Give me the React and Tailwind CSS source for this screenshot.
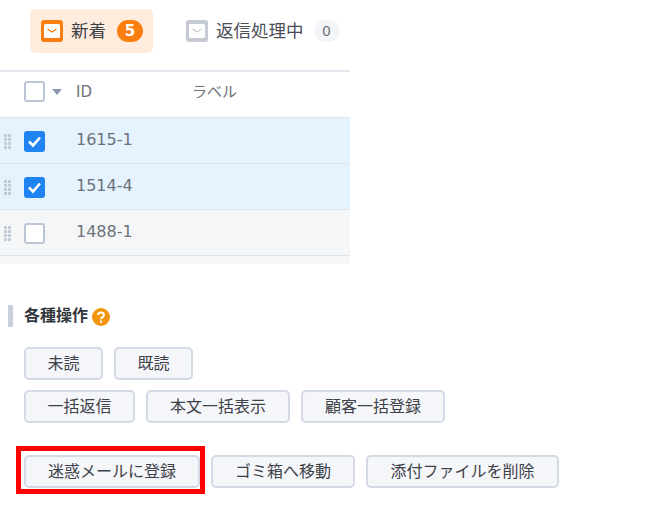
const FONT = "font-['DejaVu_Sans','Noto_Sans_CJK_JP',sans-serif]";

function Mail({ color, line }) {
  return (
    <svg width="22" height="22" viewBox="0 0 22 22" className="shrink-0">
      <rect x="0" y="0" width="22" height="22" rx="3" fill={color} />
      <rect x="3" y="4" width="16" height="14" rx="1.5" fill="#fff" />
      <path d="M6.5 9 L11 12 L15.5 9" fill="none" stroke={line} strokeWidth="1.4" />
    </svg>
  );
}

function Grip() {
  return (
    <svg width="8" height="16" viewBox="0 0 8 16" className="shrink-0">
      {[0, 4, 8, 12].map((y) =>
        [0, 4].map((x) => <rect key={`${x}-${y}`} x={x} y={y} width="3" height="3" fill="#c3cad8" />)
      )}
    </svg>
  );
}

function Check({ checked }) {
  if (checked) {
    return (
      <span className="flex size-[21px] items-center justify-center rounded-[3px] bg-[#1f83f2]">
        <svg width="15" height="13" viewBox="0 0 15 13">
          <path d="M2 6.5 L6 10.5 L13 2.5" fill="none" stroke="#fff" strokeWidth="2.6" />
        </svg>
      </span>
    );
  }
  return <span className="block size-[21px] rounded-[3px] border-2 border-[#bcc5d6] bg-white" />;
}

function Row({ id, checked }) {
  const bg = checked ? "bg-[#e5f3fe]" : "bg-[#f5f6f8]";
  return (
    <div className={`flex h-[46px] items-start border-b border-[#dfe3ea] ${bg}`}>
      <div className="ml-1 mt-[16px] w-[20px]">
        <Grip />
      </div>
      <div className="mt-[13px]">
        <Check checked={checked} />
      </div>
      <div className="ml-[31px] mt-[10px] text-[16px] leading-[24px] text-[#6d7179]">{id}</div>
    </div>
  );
}

function Btn({ children, className = "" }) {
  return (
    <button
      className={`flex h-[33px] items-center justify-center rounded-[5px] border-2 border-[#d3dae6] bg-[#f5f6f9] text-[16px] text-[#3d4148] ${className}`}
    >
      {children}
    </button>
  );
}

export default function App() {
  return (
    <div className={`h-[507px] w-[670px] overflow-hidden bg-white ${FONT}`}>
      <div className="flex h-[70px] w-[350px] items-start pt-[9px]">
        <div className="ml-[30px] flex h-[44px] w-[123px] items-center rounded-[5px] bg-[#ffecdd] pl-[11px]">
          <Mail color="#fb7f10" line="#fb7f10" />
          <span className="ml-[8px] text-[17.5px] text-[#3d4148]">新着</span>
          <span className="ml-[11px] flex h-[22px] w-[26px] items-center justify-center rounded-full bg-[#fb7f10] text-[15px] font-bold text-white">
            5
          </span>
        </div>
        <div className="ml-[33px] flex h-[44px] items-center">
          <Mail color="#c5cad4" line="#c5cad4" />
          <span className="ml-[8px] text-[17.5px] text-[#4a4e55]">返信処理中</span>
          <span className="ml-[10px] flex h-[22px] w-[26px] items-center justify-center rounded-full bg-[#f4f5f8] text-[14px] text-[#6d7179]">
            0
          </span>
        </div>
      </div>

      <div className="w-[350px] border-t-2 border-[#e4e7ed]">
        <div className="flex h-[46px] items-start border-b border-[#dfe3ea] bg-white pl-[24px] pt-[10px]">
          <span className="-mt-px">
            <Check checked={false} />
          </span>
          <svg width="12" height="8" viewBox="0 0 12 8" className="ml-[6px] mt-[6px]">
            <path d="M1 1 H11 L6 7 Z" fill="#8b97ad" />
          </svg>
          <span className="ml-[13px] w-[116px] text-[15px] leading-[21px] text-[#6d7179]">ID</span>
          <span className="text-[15px] leading-[21px] text-[#6d7179]">ラベル</span>
        </div>
        <Row id="1615-1" checked />
        <Row id="1514-4" checked />
        <Row id="1488-1" checked={false} />
        <div className="h-[8px] bg-[#f5f6f8]" />
      </div>

      <div className="mt-[41px] ml-[8px] flex h-[22px] items-center">
        <span className="h-[22px] w-[5px] rounded-[1px] bg-[#c9d0dc]" />
        <span className="ml-[11px] text-[16px] font-bold text-[#33363c]">各種操作</span>
        <svg width="18" height="18" viewBox="0 0 18 18" className="ml-[4px] mt-[2px]">
          <circle cx="9" cy="9" r="9" fill="#f39508" />
          <path d="M6 7 C6 3.6 12 3.6 12 7 C12 9.2 9 9 9 11.2" fill="none" stroke="#fff" strokeWidth="2" />
          <rect x="8" y="12.6" width="2" height="2.2" fill="#fff" />
        </svg>
      </div>

      <div className="ml-[24px] mt-[20px] flex flex-col">
        <div className="flex gap-[11px]">
          <Btn className="w-[79px]">未読</Btn>
          <Btn className="w-[79px]">既読</Btn>
        </div>
        <div className="mt-[10px] flex gap-[11px]">
          <Btn className="w-[111px]">一括返信</Btn>
          <Btn className="w-[144px]">本文一括表示</Btn>
          <Btn className="w-[144px]">顧客一括登録</Btn>
        </div>
        <div className="mt-[32px] flex gap-[11px]">
          <div className="relative">
            <Btn className="w-[176px]">迷惑メールに登録</Btn>
            <span className="absolute -left-[8px] -right-[5px] -top-[9px] -bottom-[6px] border-[5px] border-[#f00]" />
          </div>
          <Btn className="w-[144px]">ゴミ箱へ移動</Btn>
          <Btn className="w-[193px]">添付ファイルを削除</Btn>
        </div>
      </div>
    </div>
  );
}
